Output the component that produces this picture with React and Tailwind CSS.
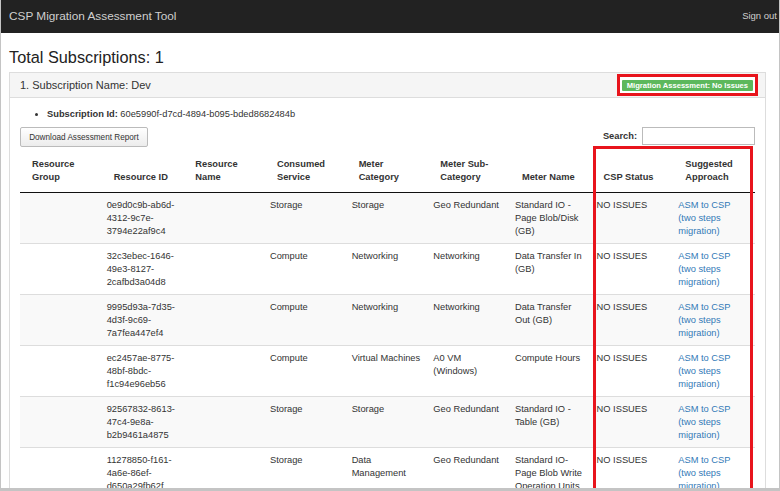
import React from "react";

// Filas de la tabla de evaluación
const rows = [
  {
    id: ["0e9d0c9b-ab6d-", "4312-9c7e-", "3794e22af9c4"],
    service: ["Storage"],
    category: ["Storage"],
    sub: ["Geo Redundant"],
    meter: ["Standard IO -", "Page Blob/Disk", "(GB)"],
  },
  {
    id: ["32c3ebec-1646-", "49e3-8127-", "2cafbd3a04d8"],
    service: ["Compute"],
    category: ["Networking"],
    sub: ["Networking"],
    meter: ["Data Transfer In", "(GB)"],
  },
  {
    id: ["9995d93a-7d35-", "4d3f-9c69-", "7a7fea447ef4"],
    service: ["Compute"],
    category: ["Networking"],
    sub: ["Networking"],
    meter: ["Data Transfer", "Out (GB)"],
  },
  {
    id: ["ec2457ae-8775-", "48bf-8bdc-", "f1c94e96eb56"],
    service: ["Compute"],
    category: ["Virtual Machines"],
    sub: ["A0 VM", "(Windows)"],
    meter: ["Compute Hours"],
  },
  {
    id: ["92567832-8613-", "47c4-9e8a-", "b2b9461a4875"],
    service: ["Storage"],
    category: ["Storage"],
    sub: ["Geo Redundant"],
    meter: ["Standard IO -", "Table (GB)"],
  },
  {
    id: ["11278850-f161-", "4a6e-86ef-", "d650a29fb62f"],
    service: ["Storage"],
    category: ["Data", "Management"],
    sub: ["Geo Redundant"],
    meter: ["Standard IO-", "Page Blob Write", "Operation Units"],
  },
];

const headers = [
  ["Resource", "Group"],
  ["Resource ID"],
  ["Resource", "Name"],
  ["Consumed", "Service"],
  ["Meter", "Category"],
  ["Meter Sub-", "Category"],
  ["Meter Name"],
  ["CSP Status"],
  ["Suggested", "Approach"],
];

const Lines = ({ lines }) => (
  <>
    {lines.map((l, i) => (
      <span key={i} className="block whitespace-nowrap">
        {l}
      </span>
    ))}
  </>
);

export default function App() {
  return (
    <div className="relative w-[780px] h-[491px] overflow-hidden bg-white border-l border-r border-b-[3px] border-[#c4c4c4] font-['Liberation_Sans',Arial,sans-serif] text-[#333]">
      {/* Navbar */}
      <div className="h-[33px] bg-[#222] flex items-center justify-between pl-[8px] pr-[2px]">
        <span className="text-[11.8px] text-[#cfcfcf]">CSP Migration Assessment Tool</span>
        <span className="text-[9.5px] text-[#cfcfcf]">Sign out</span>
      </div>

      <div className="pl-[8px] pr-[13px]">
        <h3 className="mt-[14px] text-[16.3px] leading-[20px] text-[#222]">Total Subscriptions: 1</h3>

        {/* Panel */}
        <div className="mt-[5px] border border-[#ddd]">
          <div className="h-[25px] bg-[#f5f5f5] border-b border-[#ddd] flex items-center justify-between pl-[10px] pr-[7px]">
            <span className="text-[11px]">1. Subscription Name: Dev</span>
            <div className="border-[3px] border-[#e8141c] pl-[2px] pr-[2px] pt-[3px] pb-[2px] bg-white">
              <div className="bg-[#5cb85c] h-[11px] px-[5px] flex items-center text-white font-bold text-[7.6px] rounded-[1px]">
                Migration Assessment: No Issues
              </div>
            </div>
          </div>

          <div className="pt-[10px] px-[10px] text-[9.3px] leading-[13px]">
            <ul className="list-disc pl-[27px] mb-[6px]">
              <li>
                <span className="font-bold">Subscription Id:</span> 60e5990f-d7cd-4894-b095-bded8682484b
              </li>
            </ul>

            <div className="flex items-start justify-between">
              <button className="h-[20px] w-[128px] border border-[#bbb] rounded-[2px] bg-gradient-to-b from-white to-[#ececec] text-[8.2px] text-[#333]">
                Download Assessment Report
              </button>
              <div className="flex items-center gap-[5px]">
                <span className="font-bold">Search:</span>
                <div className="w-[113px] h-[18px] border border-[#bbb] bg-white" />
              </div>
            </div>

            <table className="mt-[5px] w-full table-fixed">
              <thead>
                <tr>
                  {headers.map((h, i) => (
                    <th
                      key={i}
                      className="text-left align-bottom font-bold pl-[12px] pr-[4px] pt-[6px] pb-[8px] border-b border-[#111]"
                    >
                      <Lines lines={h} />
                    </th>
                  ))}
                </tr>
              </thead>
              <tbody>
                {rows.map((r, i) => (
                  <tr key={i} className={i % 2 === 0 ? "bg-[#f9f9f9]" : "bg-white"}>
                    {[[], r.id, [], r.service, r.category, r.sub, r.meter].map((c, j) => (
                      <td key={j} className="align-top pl-[5px] pr-[2px] pt-[6px] pb-[5px] border-t border-[#ddd]">
                        <Lines lines={c} />
                      </td>
                    ))}
                    <td className="align-top pl-[5px] pr-[2px] pt-[6px] pb-[5px] border-t border-[#ddd]">
                      NO ISSUES
                    </td>
                    <td className="align-top pl-[5px] pr-[2px] pt-[6px] pb-[5px] border-t border-[#ddd] text-[#337ab7]">
                      <Lines lines={["ASM to CSP", "(two steps", "migration)"]} />
                    </td>
                  </tr>
                ))}
              </tbody>
            </table>
          </div>
        </div>
      </div>

      {/* Marco rojo sobre las columnas CSP */}
      <div className="absolute left-[592px] top-[146px] w-[160px] h-[400px] border-[3px] border-[#e8141c] pointer-events-none" />
    </div>
  );
}
